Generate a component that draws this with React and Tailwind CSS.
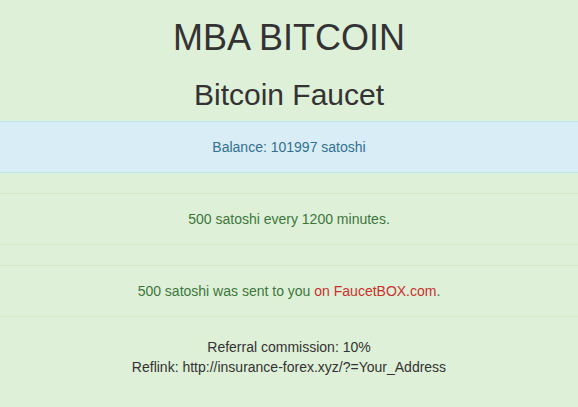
export default function App() {
  return (
    <div className="min-h-[407px] bg-[#dff0d8] text-[#333] text-center text-[14px] leading-[20px] font-['Liberation_Sans',Arial,sans-serif] pt-[18px]">
      <h1 className="text-[36px] leading-[40px] font-normal">MBA BITCOIN</h1>
      <h2 className="mt-[20px] mb-[10px] text-[30px] leading-[33px] font-normal">Bitcoin Faucet</h2>

      <div className="mb-[20px] py-[15px] border-y border-[#bce8f1] bg-[#d9edf7] text-[#31708f]">
        Balance: 101997 satoshi
      </div>

      <div className="mb-[20px] py-[15px] border-y border-[#d6e9c6] bg-[#dff0d8] text-[#3c763d]">
        500 satoshi every 1200 minutes.
      </div>

      <div className="mb-[20px] py-[15px] border-y border-[#d6e9c6] bg-[#dff0d8] text-[#3c763d]">
        500 satoshi was sent to you <span className="text-[#c9302c]">on FaucetBOX.com</span>.
      </div>

      <p>Referral commission: 10%</p>
      <p>Reflink: http://insurance-forex.xyz/?=Your_Address</p>
    </div>
  );
}
